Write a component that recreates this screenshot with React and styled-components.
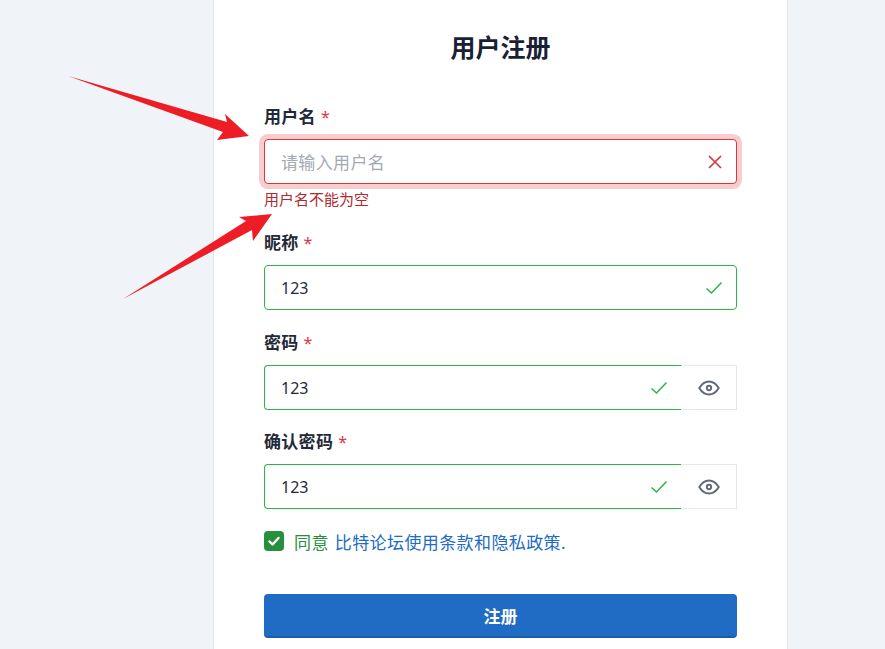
import React from 'react'
import styled, { createGlobalStyle } from 'styled-components'

const Global = createGlobalStyle`
  html, body { margin: 0; padding: 0; height: 100%; overflow: hidden; background: #f0f4f9; }
  * { box-sizing: border-box; }
  body { font-family: "Noto Sans", "Noto Sans CJK SC", sans-serif; color: #1a1f36; }
`

const Page = styled.div`
  position: relative;
  width: 885px;
  height: 649px;
  overflow: hidden;
  padding-left: 213px;
`

const Card = styled.div`
  width: 575px;
  height: 680px;
  background: #fff;
  border-left: 1px solid #e3e6ea;
  border-right: 1px solid #e3e6ea;
  padding: 29px 50px 0;
`

const Title = styled.h1`
  margin: 0 0 40px;
  height: 36px;
  line-height: 36px;
  font-size: 25px;
  font-weight: 700;
  text-align: center;
  color: #1a1f36;
`

const Field = styled.div`
  margin-bottom: ${p => p.$gap}px;
`

const Label = styled.div`
  height: 24px;
  line-height: 24px;
  margin-bottom: 10px;
  font-size: 17px;
  font-weight: 600;
  letter-spacing: 0.3px;
  color: #1f2937;
`

const Star = styled.span`
  margin-left: 5px;
  font-size: 16px;
  font-weight: 400;
  color: #dc3545;
`

const Row = styled.div`
  display: flex;
  height: 45px;
`

const InputBox = styled.div`
  flex: 1;
  display: flex;
  align-items: center;
  justify-content: space-between;
  padding: 0 13px 0 16px;
  background: #fff;
  border: 1px solid ${p => (p.$error ? '#d9363e' : '#2fb344')};
  border-right: ${p => (p.$group ? 'none' : undefined)};
  border-radius: ${p => (p.$group ? '4px 0 0 4px' : '4px')};
  box-shadow: ${p => (p.$error ? '0 0 0 5px #f7cdcf' : 'none')};
  font-size: 16px;
  color: #1f2937;
`

const Placeholder = styled.span`
  font-size: 17px;
  letter-spacing: 0.35px;
  color: #a3a9b3;
`

const EyeButton = styled.div`
  width: 56px;
  display: flex;
  align-items: center;
  justify-content: center;
  background: #fff;
  border: 1px solid #e6e7e9;
  border-left: none;
  color: #626976;
`

const ErrorText = styled.div`
  margin-top: 5px;
  height: 20px;
  line-height: 20px;
  font-size: 15px;
  color: #b02a30;
`

const Agree = styled.div`
  display: flex;
  align-items: center;
  gap: 10px;
  height: 24px;
  margin: 20px 0 41px;
  font-size: 17px;
  letter-spacing: 0.4px;
`

const Check = styled.div`
  width: 20px;
  height: 20px;
  border-radius: 4px;
  background: #28903c;
  display: flex;
  align-items: center;
  justify-content: center;
`

const Green = styled.span`
  color: #28903c;
`

const Blue = styled.span`
  margin-left: 6px;
  color: #206bc4;
`

const Submit = styled.button`
  display: block;
  width: 100%;
  height: 44px;
  border: none;
  border-bottom: 2px solid #1b5dab;
  border-radius: 4px;
  background: #206bc4;
  color: #fff;
  font-family: inherit;
  font-size: 17px;
  font-weight: 700;
`

const Overlay = styled.svg`
  position: absolute;
  left: 0;
  top: 0;
  pointer-events: none;
`

const CheckIcon = () => (
  <svg width="18" height="18" viewBox="0 0 18 18" fill="none" stroke="#2fb344" strokeWidth="1.5">
    <path d="M1.5 9.5 L6.5 14 L16.5 3.5" />
  </svg>
)

const CrossIcon = () => (
  <svg width="16" height="16" viewBox="0 0 16 16" fill="none" stroke="#d9363e" strokeWidth="1.7">
    <path d="M2 2 L14 14 M14 2 L2 14" />
  </svg>
)

const EyeIcon = () => (
  <svg width="26" height="26" viewBox="0 0 24 24" fill="none" stroke="currentColor" strokeWidth="1.8" strokeLinecap="round" strokeLinejoin="round">
    <path d="M10 12a2 2 0 1 0 4 0a2 2 0 0 0 -4 0" />
    <path d="M21 12c-2.4 4 -5.4 6 -9 6c-3.6 0 -6.6 -2 -9 -6c2.4 -4 5.4 -6 9 -6c3.6 0 6.6 2 9 6" />
  </svg>
)

export default function App() {
  return (
    <Page>
      <Global />
      <Card>
        <Title>用户注册</Title>

        <Field $gap={22}>
          <Label>用户名<Star>*</Star></Label>
          <Row>
            <InputBox $error>
              <Placeholder>请输入用户名</Placeholder>
              <CrossIcon />
            </InputBox>
          </Row>
          <ErrorText>用户名不能为空</ErrorText>
        </Field>

        <Field $gap={21}>
          <Label>昵称<Star>*</Star></Label>
          <Row>
            <InputBox>123<CheckIcon /></InputBox>
          </Row>
        </Field>

        <Field $gap={20}>
          <Label>密码<Star>*</Star></Label>
          <Row>
            <InputBox $group>123<CheckIcon /></InputBox>
            <EyeButton><EyeIcon /></EyeButton>
          </Row>
        </Field>

        <Field $gap={0}>
          <Label>确认密码<Star>*</Star></Label>
          <Row>
            <InputBox $group>123<CheckIcon /></InputBox>
            <EyeButton><EyeIcon /></EyeButton>
          </Row>
        </Field>

        <Agree>
          <Check>
            <svg width="14" height="14" viewBox="0 0 14 14" fill="none" stroke="#fff" strokeWidth="2.4" strokeLinecap="round" strokeLinejoin="round">
              <path d="M2.5 7.5 L5.5 10.5 L11.5 4" />
            </svg>
          </Check>
          <span><Green>同意</Green><Blue>比特论坛使用条款和隐私政策.</Blue></span>
        </Agree>

        <Submit>注册</Submit>
      </Card>

      <Overlay width="885" height="649" viewBox="0 0 885 649">
        <polygon fill="#ee1c25" points="68,76 227,122 225,114 249,136 217,140 223,132" />
        <polygon fill="#ee1c25" points="123,299 246,221 239,217 272,214 253,241 252,230" />
      </Overlay>
    </Page>
  )
}
